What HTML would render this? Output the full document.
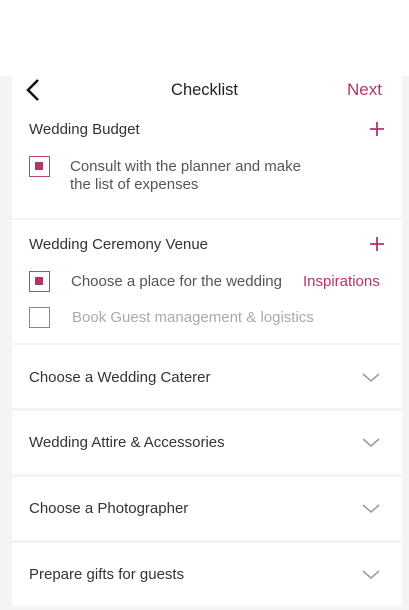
<!DOCTYPE html>
<html><head><meta charset="utf-8"><style>
*{margin:0;padding:0;box-sizing:border-box}
body{width:409px;height:610px;background:#f4f4f4;font-family:"Liberation Sans",sans-serif;color:#333;position:relative;overflow:hidden}
.top{position:absolute;left:0;top:0;width:409px;height:76px;background:#fff}
.card{position:absolute;left:12px;width:390px;background:#fff}
.t{position:absolute;white-space:nowrap;font-size:15px;line-height:18px;margin-top:1px}
.pink{color:#b3346b}
.cb{position:absolute;width:21px;height:21px;border:1.5px solid #c4426f}
.cb i{position:absolute;left:5px;top:5px;width:8px;height:8px;background:#b3346b}
.chev{position:absolute;left:362px}
.plus{position:absolute;left:370px}
</style></head><body>
<div class="top"></div>
<div class="card" style="top:76px;height:142px"></div>
<div class="card" style="top:220px;height:123px"></div>
<div class="card" style="top:345px;height:63px"></div>
<div class="card" style="top:411px;height:63px"></div>
<div class="card" style="top:477px;height:63px"></div>
<div class="card" style="top:543px;height:63px"></div>

<svg style="position:absolute;left:24px;top:78px" width="18" height="24"><path d="M14 2 L4 12 L14 22" fill="none" stroke="#111" stroke-width="2.5"/></svg>
<div class="t" style="left:0;width:409px;text-align:center;top:80px;font-size:16.5px;color:#222">Checklist</div>
<div class="t pink" style="left:347px;top:80px;font-size:17px">Next</div>

<div class="t" style="left:29px;top:120px">Wedding Budget</div>
<svg class="plus" style="top:122px" width="14" height="14"><path d="M7 0V14M0 7H14" stroke="#b3346b" stroke-width="1.8"/></svg>
<div class="cb" style="left:29px;top:156px"><i></i></div>
<div class="t" style="left:70px;top:157px;color:#555;line-height:18px">Consult with the planner and make<br>the list of expenses</div>

<div class="t" style="left:29px;top:235px">Wedding Ceremony Venue</div>
<svg class="plus" style="top:237px" width="14" height="14"><path d="M7 0V14M0 7H14" stroke="#b3346b" stroke-width="1.8"/></svg>
<div class="cb" style="left:29px;top:271px"><i></i></div>
<div class="t" style="left:71px;top:272px;color:#555">Choose a place for the wedding</div>
<div class="t pink" style="left:303px;top:272px">Inspirations</div>
<div class="cb" style="left:29px;top:307px;border-color:#888"></div>
<div class="t" style="left:72px;top:308px;color:#aaa">Book Guest management &amp; logistics</div>

<div class="t" style="left:29px;top:368px">Choose a Wedding Caterer</div><svg class="chev" style="top:373px" width="18" height="10"><path d="M1 1L9 8L17 1" fill="none" stroke="#999" stroke-width="1.5"/></svg>
<div class="t" style="left:29px;top:433px">Wedding Attire &amp; Accessories</div><svg class="chev" style="top:438px" width="18" height="10"><path d="M1 1L9 8L17 1" fill="none" stroke="#999" stroke-width="1.5"/></svg>
<div class="t" style="left:29px;top:499px">Choose a Photographer</div><svg class="chev" style="top:504px" width="18" height="10"><path d="M1 1L9 8L17 1" fill="none" stroke="#999" stroke-width="1.5"/></svg>
<div class="t" style="left:29px;top:565px">Prepare gifts for guests</div><svg class="chev" style="top:570px" width="18" height="10"><path d="M1 1L9 8L17 1" fill="none" stroke="#999" stroke-width="1.5"/></svg>
</body></html>
